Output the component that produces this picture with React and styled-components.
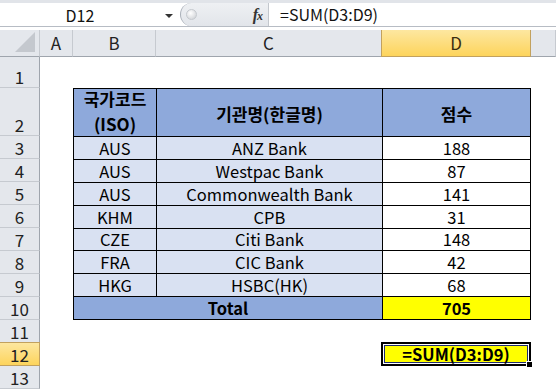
import React from "react";
import styled, { createGlobalStyle } from "styled-components";

const GlobalStyle = createGlobalStyle`
    html, body {
        margin: 0;
        padding: 0;
        background: #ffffff;
        overflow: hidden;
    }
    body {
        font-family: "Noto Sans CJK KR", "Noto Sans", sans-serif;
        color: #000;
    }
`

const rows = [
    ['AUS', 'ANZ Bank', 188],
    ['AUS', 'Westpac Bank', 87],
    ['AUS', 'Commonwealth Bank', 141],
    ['KHM', 'CPB', 31],
    ['CZE', 'Citi Bank', 148],
    ['FRA', 'CIC Bank', 42],
    ['HKG', 'HSBC(HK)', 68],
]

const columns = ['A', 'B', 'C', 'D']

function App() {
    return(
        <Window>
            <GlobalStyle />
            <FormulaBar>
                <NameBox>
                    <NameText>D12</NameText>
                    <DropArrow />
                </NameBox>
                <FxPill>
                    <Knob />
                    <Fx>f<small>x</small></Fx>
                </FxPill>
                <FormulaInput>=SUM(D3:D9)</FormulaInput>
            </FormulaBar>

            <Sheet>
                <Corner><CornerTriangle /></Corner>
                {columns.map(col => (
                    <ColHead key={col} $active={col === 'D'}>{col}</ColHead>
                ))}
                <ColHead />

                {Array.from({ length: 13 }, (_, i) => (
                    <RowHead key={i} $row={i + 2} $active={i + 1 === 12}>{i + 1}</RowHead>
                ))}

                <Table>
                    <HeadCell $stack>
                        <span>국가코드</span>
                        <span>(ISO)</span>
                    </HeadCell>
                    <HeadCell>기관명(한글명)</HeadCell>
                    <HeadCell>점수</HeadCell>

                    {rows.map((row, idx) => (
                        <React.Fragment key={idx}>
                            <Cell $tint>{row[0]}</Cell>
                            <Cell $tint>{row[1]}</Cell>
                            <Cell>{row[2]}</Cell>
                        </React.Fragment>
                    ))}

                    <TotalCell>Total</TotalCell>
                    <SumCell>705</SumCell>
                </Table>

                <Selected>
                    =SUM(D3:D9)
                    <FillHandle />
                </Selected>
            </Sheet>
        </Window>
    )
}

export default App

const Window = styled.div`
    width: 556px;
    height: 391px;
    display: flex;
    flex-direction: column;
    background: #fff;
`

const FormulaBar = styled.div`
    height: 23px;
    border-top: 3px solid #e1e4e9;
    border-bottom: 1px solid #b7bcc4;
    display: flex;
    align-items: stretch;
    background: #fff;
    margin-bottom: 3px;
    font-size: 16px;
    color: #111;
`

const NameBox = styled.div`
    width: 178px;
    display: flex;
    align-items: center;
`

const NameText = styled.div`
    width: 160px;
    text-align: center;
    line-height: 22px;
`

const DropArrow = styled.div`
    width: 0;
    height: 0;
    border-left: 4px solid transparent;
    border-right: 4px solid transparent;
    border-top: 4px solid #333;
    margin-left: 5px;
    margin-top: 2px;
`

const FxPill = styled.div`
    width: 89px;
    margin-left: 2px;
    display: flex;
    align-items: center;
    justify-content: space-between;
    padding: 0 6px 0 3px;
    box-sizing: border-box;
    background: linear-gradient(#eef0f3, #e2e5ea);
    border-radius: 12px 0 0 12px;
    border-left: 1px solid #a9afb8;
    border-right: 1px solid #c3c7cd;
`

const Knob = styled.div`
    width: 9px;
    height: 9px;
    border-radius: 50%;
    background: radial-gradient(circle at 40% 35%, #ffffff, #c9ccd1);
    border: 1px solid #c5c9ce;
    margin-left: 2px;
`

const Fx = styled.div`
    font-family: "Liberation Serif", serif;
    font-style: italic;
    font-weight: bold;
    font-size: 16px;
    color: #333;
    letter-spacing: -1px;

    small {
        font-size: 12px;
    }
`

const FormulaInput = styled.div`
    flex: 1;
    padding-left: 11px;
    line-height: 22px;
    font-size: 16px;
`

const Sheet = styled.div`
    display: grid;
    grid-template-columns: 40px 33px 83px 226px 149px 1fr;
    grid-template-rows: 27px 31px 48px repeat(11, 23px);
`

const headerBase = `
    box-sizing: border-box;
    display: flex;
    justify-content: center;
    color: #222;
    font-size: 17px;
`

const Corner = styled.div`
    ${headerBase}
    grid-column: 1;
    grid-row: 1;
    background: #e4e7ec;
    border-right: 1px solid #c6cad0;
    border-bottom: 1px solid #9fa5ad;
    position: relative;
`

const CornerTriangle = styled.div`
    position: absolute;
    right: 4px;
    bottom: 4px;
    width: 0;
    height: 0;
    border-left: 20px solid transparent;
    border-bottom: 20px solid #c4c8ce;
`

const ColHead = styled.div`
    ${headerBase}
    grid-row: 1;
    align-items: center;
    line-height: 20px;
    background: ${p => p.$active ? 'linear-gradient(#fde7a0, #fdd45c)' : '#e4e7ec'};
    border-right: 1px solid ${p => p.$active ? '#c2a15e' : '#c6cad0'};
    border-bottom: 1px solid ${p => p.$active ? '#c2a15e' : '#9fa5ad'};
    border-left: ${p => p.$active ? '1px solid #c2a15e' : 'none'};
    margin-left: ${p => p.$active ? '-1px' : '0'};
    color: ${p => p.$active ? '#3a2e10' : '#222'};
`

const RowHead = styled.div`
    ${headerBase}
    grid-column: 1;
    grid-row: ${p => p.$row};
    align-items: flex-end;
    line-height: 21px;
    background: ${p => p.$active ? 'linear-gradient(#fde7a0, #fdd45c)' : '#e4e7ec'};
    border-right: 1px solid ${p => p.$active ? '#c2a15e' : '#9fa5ad'};
    border-bottom: 1px solid ${p => p.$active ? '#c2a15e' : '#c6cad0'};
    border-top: ${p => p.$active ? '1px solid #c2a15e' : 'none'};
    margin-top: ${p => p.$active ? '-1px' : '0'};
`

const Table = styled.div`
    grid-column: 3 / 6;
    grid-row: 3 / 12;
    box-sizing: border-box;
    border: 1px solid #000;
    background: #000;
    display: grid;
    grid-template-columns: 82px 225px 1fr;
    grid-template-rows: 47px repeat(8, 1fr);
    gap: 1px;
    font-size: 16.5px;
`

const HeadCell = styled.div`
    background: #8ea9db;
    font-weight: bold;
    font-size: 17px;
    display: flex;
    flex-direction: column;
    align-items: center;
    justify-content: center;
    line-height: ${p => p.$stack ? '25px' : '22px'};
    padding: ${p => p.$stack ? '0 0 4px' : '3px 0 0'};
    box-sizing: border-box;
`

const Cell = styled.div`
    background: ${p => p.$tint ? '#d9e1f2' : '#ffffff'};
    display: flex;
    align-items: center;
    justify-content: center;
    line-height: 20px;
`

const TotalCell = styled(Cell)`
    grid-column: 1 / 3;
    background: #8ea9db;
    font-weight: bold;
`

const SumCell = styled(Cell)`
    background: #ffff00;
    font-weight: bold;
`

const Selected = styled.div`
    grid-column: 5;
    grid-row: 13;
    margin: -1px 0 0 -1px;
    box-sizing: border-box;
    border: 2px solid #000;
    box-shadow: inset 0 0 0 1px #fff, inset 0 0 0 2px #1f2c6e;
    background: #ffff00;
    display: flex;
    align-items: center;
    justify-content: center;
    font-weight: bold;
    font-size: 16.5px;
    line-height: 20px;
    position: relative;
`

const FillHandle = styled.div`
    position: absolute;
    right: -4px;
    bottom: -4px;
    width: 5px;
    height: 5px;
    background: #000;
    border: 1px solid #fff;
`
